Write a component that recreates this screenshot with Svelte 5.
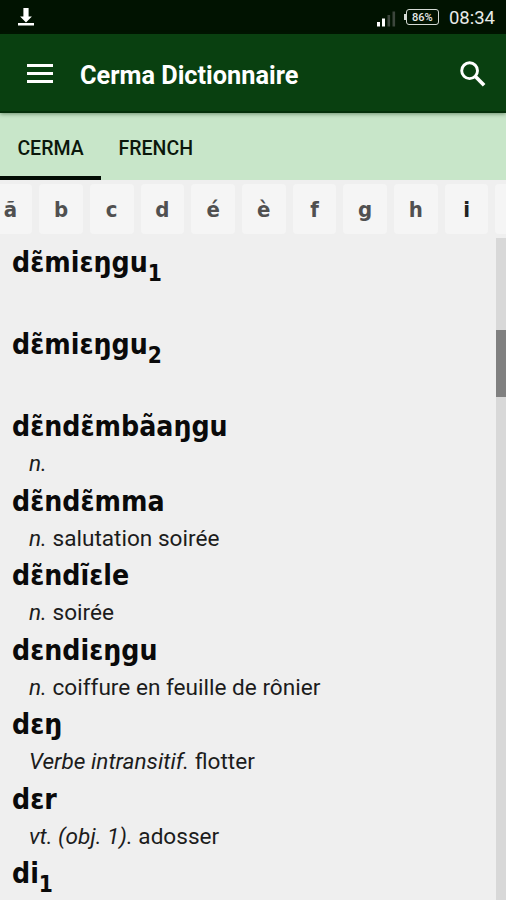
<script>
  let activeTab = "CERMA";
  const tabs = ["CERMA", "FRENCH"];
  const letters = ["ã", "b", "c", "d", "é", "è", "f", "g", "h", "i", ""];

  const entries = [
    { word: "dɛ̃miɛŋgu", index: 1 },
    { word: "dɛ̃miɛŋgu", index: 2 },
    { word: "dɛ̃ndɛ̃mbãaŋgu", pos: "n." },
    { word: "dɛ̃ndɛ̃mma", pos: "n.", gloss: "salutation soirée" },
    { word: "dɛ̃ndĩɛle", pos: "n.", gloss: "soirée" },
    { word: "dɛndiɛŋgu", pos: "n.", gloss: "coiffure en feuille de rônier" },
    { word: "dɛŋ", pos: "Verbe intransitif.", gloss: "flotter" },
    { word: "dɛr", pos: "vt. (obj. 1).", gloss: "adosser" },
    { word: "di", index: 1 }
  ];
</script>

<div class="app">
  <div class="status-bar">
    <svg class="download" width="16" height="18" viewBox="0 0 16 18">
      <path d="M5.4 0h5.2v8.5h3.3L8 14.4 2.1 8.5h3.3zM0 15h16v2.6H0z" fill="#fff" />
    </svg>
    <div class="status-right">
      <svg class="signal" width="20" height="17" viewBox="0 0 20 17">
        <rect x="1" y="12" width="3" height="4.5" fill="#fff" />
        <rect x="6" y="8.5" width="3" height="8" fill="#fff" />
        <rect x="11.5" y="5" width="2.6" height="11.5" fill="#3c463c" />
        <rect x="16.5" y="1.5" width="2.6" height="15" fill="#3c463c" />
      </svg>
      <div class="battery"><span>86%</span></div>
      <span class="clock">08:34</span>
    </div>
  </div>

  <header class="toolbar">
    <button class="menu" aria-label="Menu">
      <span></span><span></span><span></span>
    </button>
    <h1>Cerma Dictionnaire</h1>
    <button class="search" aria-label="Search">
      <svg width="26" height="26" viewBox="0 0 26 26" fill="none" stroke="#fff">
        <circle cx="9.6" cy="9.7" r="7.9" stroke-width="2.9" />
        <path d="M15.2 15.3l8.9 8.9" stroke-width="3.7" />
      </svg>
    </button>
  </header>

  <nav class="tabs">
    {#each tabs as tab}
      <button class="tab" class:active={tab === activeTab} on:click={() => (activeTab = tab)}>
        {tab}
      </button>
    {/each}
  </nav>

  <div class="letters">
    {#each letters as letter}
      <button class="letter" class:dark={letter === "i"}>{letter}</button>
    {/each}
  </div>

  <main class="content">
    <div class="entries">
      {#each entries as entry}
        <div class="entry" class:indexed={entry.index}>
          <div class="word">{entry.word}{#if entry.index}<span class="index">{entry.index}</span>{/if}</div>
          {#if entry.pos}
            <div class="definition"><i>{entry.pos}</i> {entry.gloss ?? ""}</div>
          {/if}
        </div>
      {/each}
    </div>
    <div class="scrollbar"><div class="thumb"></div></div>
  </main>
</div>

<style>
  :global(body) {
    margin: 0;
    background: #efefef;
  }

  button {
    border: none;
    background: none;
    padding: 0;
    margin: 0;
    font-family: inherit;
  }

  .app {
    width: 506px;
    height: 900px;
    display: flex;
    flex-direction: column;
    overflow: hidden;
    background: #efefef;
    color: #0a0a0a;
    font-family: Roboto, sans-serif;
  }

  .status-bar {
    height: 34px;
    flex: none;
    box-sizing: border-box;
    padding: 0 11px 0 18px;
    display: flex;
    justify-content: space-between;
    align-items: center;
    background: #011301;
  }

  .download {
    margin-bottom: 1px;
  }

  .status-right {
    display: flex;
    align-items: center;
  }

  .signal {
    margin: 2px 8px 0 0;
  }

  .battery {
    position: relative;
    width: 33px;
    height: 16px;
    box-sizing: border-box;
    border: 1.5px solid #d5dad5;
    border-radius: 3px;
    margin: 0 10px 0 2px;
    display: flex;
    align-items: center;
    justify-content: center;
    color: #e6e9e6;
    font-size: 11px;
    font-weight: 500;
  }

  .battery::before {
    content: "";
    position: absolute;
    left: -3px;
    top: 4px;
    width: 2px;
    height: 6px;
    background: #d5dad5;
  }

  .clock {
    color: #e8ebe8;
    font-size: 18.5px;
    line-height: 20px;
    margin-top: 2px;
  }

  .toolbar {
    height: 79px;
    flex: none;
    box-sizing: border-box;
    padding: 2px 20px 0 27px;
    display: flex;
    align-items: center;
    background: #094010;
    border-bottom: 2px solid #04300a;
    box-shadow: 0 1px 4px rgba(0, 40, 0, 0.45);
    z-index: 1;
  }

  .menu {
    width: 26px;
    display: flex;
    flex-direction: column;
    gap: 5px;
  }

  .menu span {
    height: 3px;
    background: #fff;
  }

  h1 {
    flex: 1;
    margin: 4px 0 0 27px;
    color: #fff;
    font-size: 25.3px;
    line-height: 30px;
    font-weight: 700;
  }

  .search {
    height: 26px;
  }

  .tabs {
    height: 67px;
    flex: none;
    display: flex;
    background: #c8e6c9;
  }

  .tab {
    box-sizing: border-box;
    padding: 7px 17.6px 0 17.4px;
    border-bottom: 4px solid transparent;
    color: #0b170b;
    font-size: 19.5px;
    font-weight: 500;
  }

  .tab.active {
    border-bottom-color: #020d03;
  }

  .letters {
    height: 58px;
    flex: none;
    box-sizing: border-box;
    padding: 4px 0;
    margin-left: -11.5px;
    display: flex;
    gap: 7px;
  }

  .letter {
    width: 43.7px;
    flex: none;
    padding-top: 1px;
    border-radius: 4px;
    background: #f5f5f5;
    color: #505050;
    font-family: "DejaVu Sans Condensed", "DejaVu Sans", sans-serif;
    font-size: 22px;
    font-weight: 700;
  }

  .letter.dark {
    color: #222;
  }

  .content {
    flex: 1;
    min-height: 0;
    display: flex;
  }

  .entries {
    flex: 1;
    padding-left: 12px;
  }

  .entry {
    height: 74.55px;
  }

  .entry.indexed {
    height: 82px;
  }

  .word {
    height: 44px;
    line-height: 49px;
    font-family: "DejaVu Sans Condensed", "DejaVu Sans", sans-serif;
    font-size: 28.2px;
    font-weight: 700;
    white-space: nowrap;
  }

  .index {
    position: relative;
    top: 9px;
    font-size: 22.5px;
  }

  .definition {
    padding-left: 17px;
    font-size: 22.6px;
    line-height: 36px;
    color: #1c1c1c;
    white-space: nowrap;
  }

  .scrollbar {
    width: 10px;
    background: #d8d8d8;
  }

  .thumb {
    height: 67px;
    margin-top: 92px;
    background: #808080;
  }
</style>
